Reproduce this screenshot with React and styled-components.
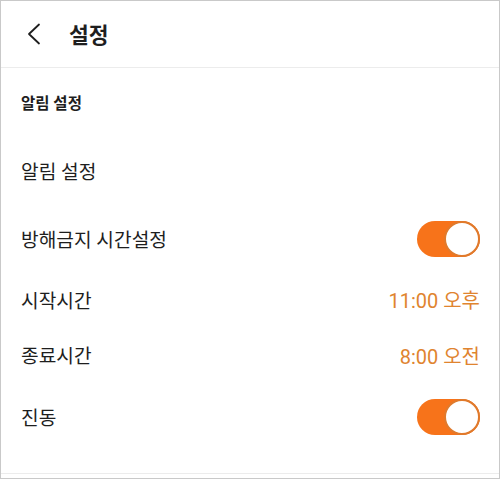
import React from "react";
import styled, { createGlobalStyle } from "styled-components";

const Global = createGlobalStyle`
  html, body { margin: 0; padding: 0; background: #fff; }
  * { box-sizing: border-box; }
`;

const Frame = styled.div`
  width: 500px;
  height: 479px;
  border: 1px solid #c9c9c9;
  background: #fff;
  font-family: Roboto, "Noto Sans CJK KR", sans-serif;
  color: #1e1e1e;
  display: flex;
  flex-direction: column;
  overflow: hidden;
`;

const Header = styled.header`
  height: 67px;
  flex: none;
  display: flex;
  align-items: center;
  padding-left: 24px;
  border-bottom: 1px solid #ececec;
`;

const BackButton = styled.button`
  border: 0;
  background: none;
  padding: 0;
  width: 16px;
  height: 22px;
  display: flex;
  align-items: center;
  justify-content: center;
  margin-right: 28px;
  margin-top: -1px;
  cursor: pointer;
`;

const Title = styled.h1`
  margin: 0;
  font-size: 21.5px;
  font-weight: 700;
  margin-top: -2px;
`;

const SectionTitle = styled.div`
  height: 68px;
  flex: none;
  display: flex;
  align-items: center;
  padding-left: 20px;
  font-size: 15.5px;
  font-weight: 700;
`;

const Row = styled.div`
  height: ${(p) => p.$h}px;
  flex: none;
  display: flex;
  align-items: center;
  justify-content: space-between;
  padding: 0 19px 0 20px;
`;

const Label = styled.span`
  font-size: 19.2px;
  font-weight: 400;
`;

const Value = styled.span`
  font-size: 20px;
  color: #e0842f;
`;

const Track = styled.div`
  width: 63px;
  height: 36px;
  border-radius: 18px;
  background: #f7731a;
  display: flex;
  align-items: center;
  justify-content: flex-end;
`;

const Knob = styled.div`
  width: 36px;
  height: 36px;
  border-radius: 50%;
  background: #fff;
  border: 2px solid #e07a2c;
`;

const Divider = styled.div`
  margin-top: auto;
  height: 1px;
  background: #ececec;
  margin-bottom: 4px;
`;

const Toggle = () => (
  <Track>
    <Knob />
  </Track>
);

export default function App() {
  return (
    <>
      <Global />
      <Frame>
        <Header>
          <BackButton aria-label="back">
            <svg width="15" height="22" viewBox="0 0 15 22" fill="none">
              <path d="M13 1.5 L3 11 L13 20.5" stroke="#1e1e1e" strokeWidth="1.8" strokeLinecap="round" strokeLinejoin="round" />
            </svg>
          </BackButton>
          <Title>설정</Title>
        </Header>
        <SectionTitle>알림 설정</SectionTitle>
        <Row $h={70}>
          <Label>알림 설정</Label>
        </Row>
        <Row $h={66}>
          <Label>방해금지 시간설정</Label>
          <Toggle />
        </Row>
        <Row $h={55}>
          <Label>시작시간</Label>
          <Value>11:00 오후</Value>
        </Row>
        <Row $h={56}>
          <Label>종료시간</Label>
          <Value>8:00 오전</Value>
        </Row>
        <Row $h={68}>
          <Label>진동</Label>
          <Toggle />
        </Row>
        <Divider />
      </Frame>
    </>
  );
}
